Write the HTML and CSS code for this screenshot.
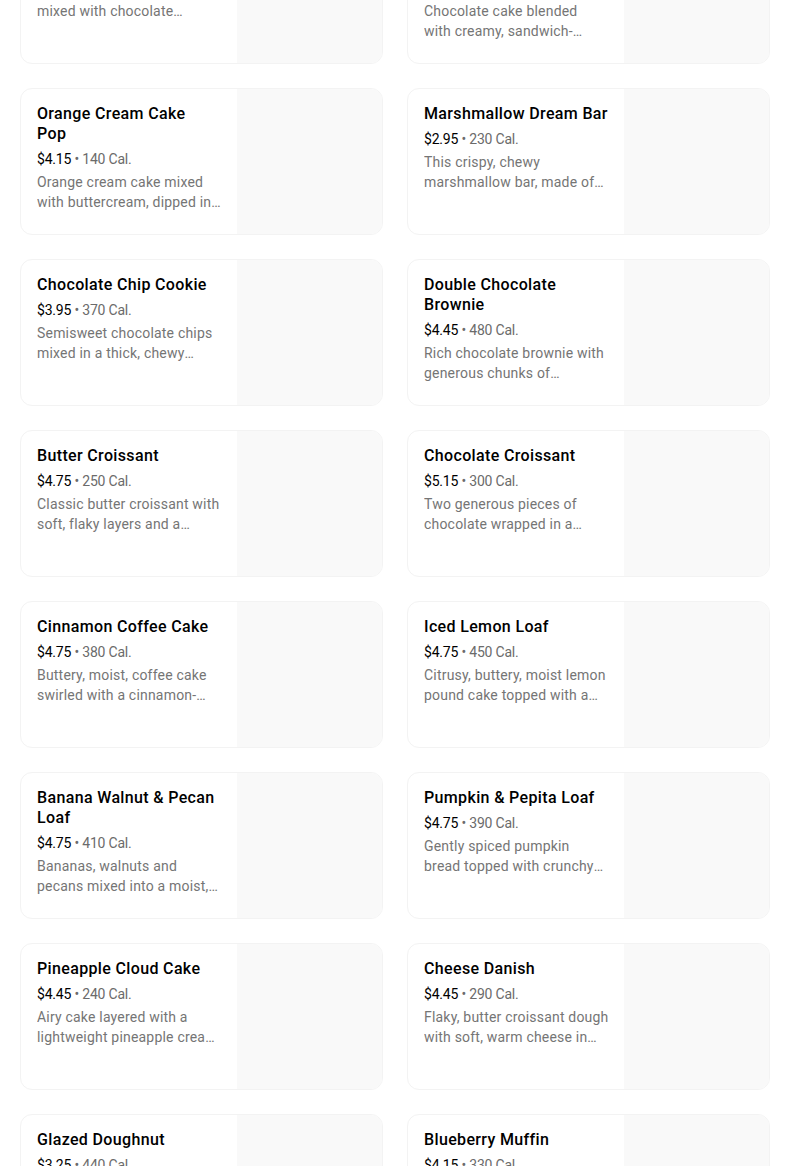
FILE: index.html
```html
<!DOCTYPE html>
<html lang="en">
<head>
<meta charset="utf-8">
<title>Bakery</title>
<link rel="stylesheet" href="styles.css">
</head>
<body>
<main class="grid">
  <article class="card"><div class="info"><h3 class="title">Chocolate Cake Pop</h3><p class="meta"><span class="price">$3.95</span> • 160 Cal.</p><p class="desc">Decadent chocolate cake mixed with chocolate buttercream, dipped in chocolaty icing.</p></div><div class="pic"></div></article>
  <article class="card"><div class="info"><h3 class="title">Cookies &amp; Cream Cake Pop</h3><p class="meta"><span class="price">$3.95</span> • 170 Cal.</p><p class="desc">Chocolate cake blended<br>with creamy, sandwich-cookie pieces and dipped in white icing.</p></div><div class="pic"></div></article>

  <article class="card"><div class="info"><h3 class="title">Orange Cream Cake<br>Pop</h3><p class="meta"><span class="price">$4.15</span> • 140 Cal.</p><p class="desc">Orange cream cake mixed with buttercream, dipped in white chocolaty icing.</p></div><div class="pic"></div></article>
  <article class="card"><div class="info"><h3 class="title">Marshmallow Dream Bar</h3><p class="meta"><span class="price">$2.95</span> • 230 Cal.</p><p class="desc">This crispy, chewy marshmallow bar, made of crispy rice and marshmallows.</p></div><div class="pic"></div></article>

  <article class="card"><div class="info"><h3 class="title">Chocolate Chip Cookie</h3><p class="meta"><span class="price">$3.95</span> • 370 Cal.</p><p class="desc">Semisweet chocolate chips mixed in a thick, chewy cookie.</p></div><div class="pic"></div></article>
  <article class="card"><div class="info"><h3 class="title">Double Chocolate Brownie</h3><p class="meta"><span class="price">$4.45</span> • 480 Cal.</p><p class="desc">Rich chocolate brownie with generous chunks of chocolate.</p></div><div class="pic"></div></article>

  <article class="card"><div class="info"><h3 class="title">Butter Croissant</h3><p class="meta"><span class="price">$4.75</span> • 250 Cal.</p><p class="desc">Classic butter croissant with soft, flaky layers and a golden-brown crust.</p></div><div class="pic"></div></article>
  <article class="card"><div class="info"><h3 class="title">Chocolate Croissant</h3><p class="meta"><span class="price">$5.15</span> • 300 Cal.</p><p class="desc">Two generous pieces of chocolate wrapped in a croissant.</p></div><div class="pic"></div></article>

  <article class="card"><div class="info"><h3 class="title">Cinnamon Coffee Cake</h3><p class="meta"><span class="price">$4.75</span> • 380 Cal.</p><p class="desc">Buttery, moist, coffee cake swirled with a cinnamon-sugar streusel.</p></div><div class="pic"></div></article>
  <article class="card"><div class="info"><h3 class="title">Iced Lemon Loaf</h3><p class="meta"><span class="price">$4.75</span> • 450 Cal.</p><p class="desc">Citrusy, buttery, moist lemon pound cake topped with a sweet icing.</p></div><div class="pic"></div></article>

  <article class="card"><div class="info"><h3 class="title">Banana Walnut &amp; Pecan Loaf</h3><p class="meta"><span class="price">$4.75</span> • 410 Cal.</p><p class="desc">Bananas, walnuts and pecans mixed into a moist, nutty loaf.</p></div><div class="pic"></div></article>
  <article class="card"><div class="info"><h3 class="title">Pumpkin &amp; Pepita Loaf</h3><p class="meta"><span class="price">$4.75</span> • 390 Cal.</p><p class="desc">Gently spiced pumpkin bread topped with crunchy pepita seeds.</p></div><div class="pic"></div></article>

  <article class="card"><div class="info"><h3 class="title">Pineapple Cloud Cake</h3><p class="meta"><span class="price">$4.45</span> • 240 Cal.</p><p class="desc">Airy cake layered with a lightweight pineapple cream filling.</p></div><div class="pic"></div></article>
  <article class="card"><div class="info"><h3 class="title">Cheese Danish</h3><p class="meta"><span class="price">$4.45</span> • 290 Cal.</p><p class="desc">Flaky, butter croissant dough with soft, warm cheese in every bite.</p></div><div class="pic"></div></article>

  <article class="card"><div class="info"><h3 class="title">Glazed Doughnut</h3><p class="meta"><span class="price">$3.25</span> • 440 Cal.</p><p class="desc">A classic doughnut with a sweet, shiny glaze.</p></div><div class="pic"></div></article>
  <article class="card"><div class="info"><h3 class="title">Blueberry Muffin</h3><p class="meta"><span class="price">$4.15</span> • 330 Cal.</p><p class="desc">Moist muffin packed with juicy blueberries.</p></div><div class="pic"></div></article>
</main>
</body>
</html>
```

FILE: styles.css
```css
html, body {
  margin: 0;
  padding: 0;
  background: #ffffff;
  overflow: hidden;
}

body {
  font-family: Roboto, "Noto Sans", sans-serif;
  color: #000000;
}

.grid {
  display: grid;
  grid-template-columns: 363px 363px;
  column-gap: 24px;
  row-gap: 24px;
  width: 750px;
  margin: -83px 0 0 20px;
}

.card {
  display: flex;
  height: 147px;
  box-sizing: border-box;
  border: 1px solid #f3f3f3;
  border-radius: 12px;
  overflow: hidden;
  background: #ffffff;
}

.info {
  flex: 1;
  min-width: 0;
  padding: 15px 15px 0 16px;
}

.pic {
  width: 145px;
  flex: none;
  background: #f9f9f9;
}

.title {
  margin: 0;
  font-size: 16px;
  line-height: 20px;
  font-weight: 500;
  letter-spacing: 0.35px;
  color: #000000;
}

.meta {
  margin: 5px 0 0 0;
  font-size: 14px;
  line-height: 20px;
  letter-spacing: -0.2px;
  color: #6b6b6b;
}

.price {
  color: #000000;
}

.desc {
  margin: 3px 0 0 0;
  font-size: 14px;
  line-height: 20px;
  letter-spacing: 0.2px;
  color: #757575;
  display: -webkit-box;
  -webkit-line-clamp: 2;
  -webkit-box-orient: vertical;
  overflow: hidden;
}
```
